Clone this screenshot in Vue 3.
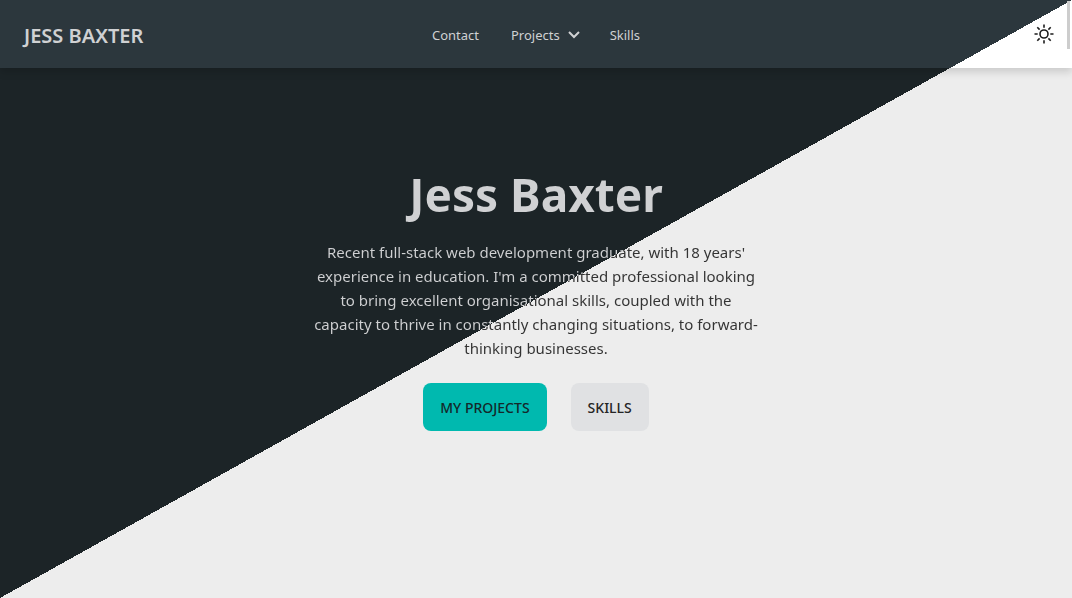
<script setup>
import { ref } from 'vue'

const links = ref([
  { label: 'Contact', href: '#contact' },
  { label: 'Projects', href: '#projects', menu: true },
  { label: 'Skills', href: '#skills' },
])
</script>

<template>
  <div class="page">
    <header class="navbar">
      <a class="brand" href="#home">JESS BAXTER</a>
      <nav class="links" aria-label="Main">
        <template v-for="link in links" :key="link.label">
          <button v-if="link.menu" class="link menu" type="button" aria-haspopup="true">
            {{ link.label }}
            <svg class="chevron" viewBox="0 0 12 8" aria-hidden="true">
              <path d="M1 1 6 6l5-5" />
            </svg>
          </button>
          <a v-else class="link" :href="link.href">{{ link.label }}</a>
        </template>
      </nav>
      <div class="tools">
        <button class="theme" type="button" aria-label="Toggle theme">
          <svg class="sun" viewBox="0 0 20 20" aria-hidden="true">
            <circle cx="10" cy="10" r="4" />
            <path d="M10 .5v3.200M10 16.300v3.200M.5 10h3.200M16.300 10h3.200M3.300 3.300l2.300 2.300M14.400 14.400l2.300 2.300M3.300 16.700l2.300-2.300M14.400 5.600l2.300-2.300" />
          </svg>
        </button>
      </div>
    </header>
    <main class="hero">
      <h1 class="title">Jess Baxter</h1>
      <p class="intro">
        Recent full-stack web development graduate, with 18 years'<br />
        experience in education. I'm a committed professional looking<br />
        to bring excellent organisational skills, coupled with the<br />
        capacity to thrive in constantly changing situations, to forward-<br />
        thinking businesses.
      </p>
      <div class="actions">
        <a class="btn primary" href="#projects">MY PROJECTS</a>
        <a class="btn" href="#skills">SKILLS</a>
      </div>
    </main>
    <div class="scroll-thumb"></div>
  </div>
</template>

<style>
body {
  background: #ededed;
}
</style>

<style scoped>
.page {
  min-height: 100vh;
  display: flex;
  flex-direction: column;
  font-family: "Segoe UI", "Noto Sans", "Open Sans", sans-serif;
  background: linear-gradient(to bottom right, #1c2427 50%, #ededed 50%) fixed;
}
.navbar {
  display: grid;
  grid-template-columns: 1fr auto 1fr;
  align-items: center;
  height: 68px;
  padding: 0 8px;
  box-sizing: border-box;
  background: linear-gradient(to bottom right, #2c373d 50%, #ffffff 50%) fixed;
  box-shadow: 0 4px 8px rgba(0, 0, 0, 0.15);
}
.brand {
  justify-self: start;
  padding: 4px 16px 0;
  color: #d0d1d3;
  font-size: 20px;
  font-weight: 600;
  line-height: 28px;
  text-decoration: none;
}
.links {
  display: flex;
  align-items: center;
  padding-top: 2px;
}
.link {
  display: flex;
  align-items: center;
  gap: 8px;
  padding: 8px 16px;
  border: 0;
  background: none;
  color: #d0d1d3;
  font: inherit;
  font-size: 13px;
  line-height: 20px;
  text-decoration: none;
  cursor: pointer;
}
.menu {
  padding-right: 14px;
}
.chevron {
  width: 12px;
  height: 8px;
  fill: none;
  stroke: #d0d1d3;
  stroke-width: 2;
}
.tools {
  justify-self: end;
}
.theme {
  display: flex;
  padding: 10px;
  border: 0;
  background: none;
  cursor: pointer;
}
.sun {
  width: 20px;
  height: 20px;
  fill: none;
  stroke: #1c1c1c;
  stroke-width: 1.6;
}
.hero {
  flex: 1;
  display: flex;
  flex-direction: column;
  align-items: center;
  padding: 92px 16px 32px;
  text-align: center;
}
.title,
.intro {
  color: transparent;
  background: linear-gradient(to bottom right, #d0d1d3 50%, #333333 50%) fixed;
  -webkit-background-clip: text;
  background-clip: text;
}
.title {
  margin: 0;
  padding: 0 4px;
  font-size: 46px;
  font-weight: 700;
  line-height: 68px;
}
.intro {
  margin: 0;
  padding: 12px 0 23px;
  font-size: 15px;
  line-height: 24px;
}
.actions {
  display: flex;
  gap: 24px;
}
.btn {
  padding: 1px 17px 0;
  border-radius: 8px;
  background: #e0e1e3;
  color: #252525;
  font-size: 14px;
  font-weight: 500;
  line-height: 47px;
  text-decoration: none;
}
.primary {
  background: #00b9af;
  color: #14282a;
}
.scroll-thumb {
  position: absolute;
  top: 1px;
  right: 2px;
  width: 3px;
  height: 48px;
  background: #cdcdcd;
}
</style>
